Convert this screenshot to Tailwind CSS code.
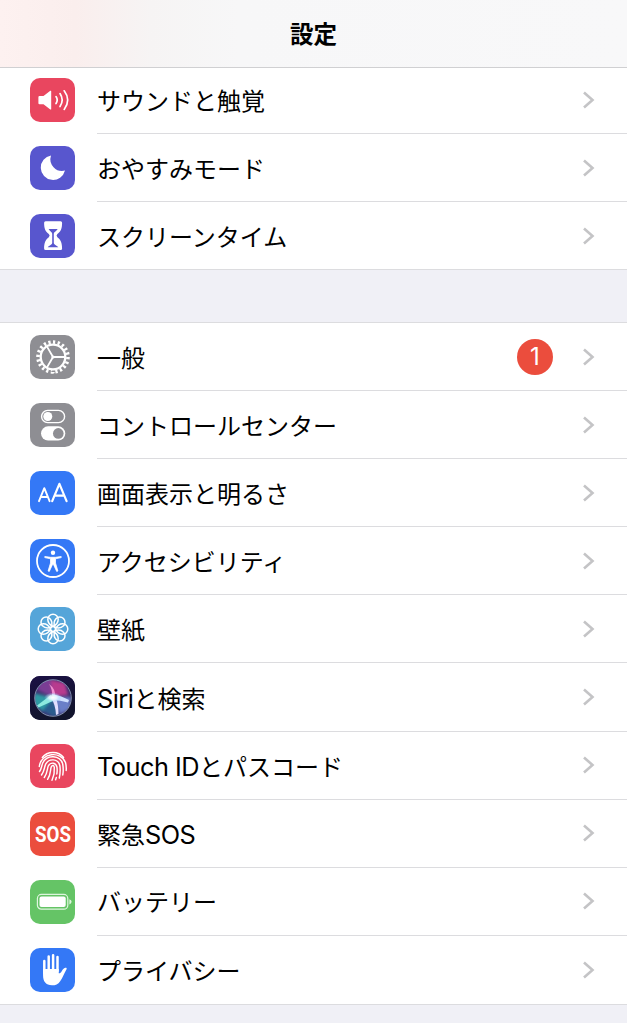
<!DOCTYPE html>
<html lang="ja">
<head>
    <meta charset="UTF-8" />
    <meta name="viewport" content="width=device-width, initial-scale=1.0" />
    <title>設定</title>
    <script src="https://cdn.jsdelivr.net/npm/@tailwindcss/browser@4"></script>
</head>
<body class="bg-[#f0f0f6] text-black font-[Inter,'Noto_Sans_CJK_JP',sans-serif] overflow-hidden h-screen">

    <!-- Nav bar -->
    <header class="relative z-10 h-[68px] flex items-center justify-center border-b border-[#d0d0d2] bg-[linear-gradient(90deg,#fdf1f0_0%,#faeeed_12%,#f6f4f4_24%,#f7f7f8_38%,#f8f8f9_100%)]">
        <h1 class="pt-[2px] text-[23.5px] leading-none font-bold">設定</h1>
    </header>

    <main class="-mt-[2px]">
        <section id="alerts" class="h-[204px] bg-white border-b border-[#dcdcdf]"></section>
        <section id="system" class="mt-[52px] bg-white border-y border-[#dcdcdf]"></section>
    </main>

    <script>
        const icons = {
            sound: `<path fill="#fff" d="M8.500 18h4l6.800-5.200q.9-.5.9.5v17.600q0 1-.9.5L12.500 26.300h-4q-1.100 0-1.100-1.100v-6q0-1.200 1.100-1.200z"/>
                <g fill="none" stroke="#fff" stroke-width="1.700" stroke-linecap="round"><path d="M25 18.600q2.400 3.500 0 7"/><path d="M29 15.600q4.400 6.500 0 13"/><path d="M33.200 12.800q7 9.300 0 18.600"/></g>`,
            moon: `<path fill="#fff" d="M20 9.500A12.300 12.300 0 1 0 34 24.600A11.800 11.800 0 0 1 20 9.500z"/>`,
            hourglass: `<path fill="#fff" d="M14.600 7.200h15q1.500 0 1.500 1.500c0 6-1.300 8.800-4.700 11.300q-1.700 1.600 0 3.200c3.400 2.500 4.700 6 4.700 11.300q0 1.600-1.500 1.600h-15q-1.500 0-1.500-1.600c0-5.300 1.300-8.800 4.700-11.300q1.700-1.600 0-3.200c-3.400-2.500-4.700-5.300-4.700-11.300q0-1.500 1.500-1.500z"/>
                <path fill="#5856ce" d="M17.600 14.900h9c-.8 2-3.800 2.900-3.800 4.900v9c0 2 2.800 2.300 4.500 4.500H16.700c1.700-2.200 4.500-2.500 4.500-4.500v-9c0-2-2.800-2.900-3.600-4.900z"/>`,
            gear: `<g fill="none" stroke="#fff"><circle cx="22" cy="22" r="12.300" stroke-width="2.300"/>
                <circle cx="22" cy="22" r="15" stroke-width="3.600" pathLength="100" stroke-dasharray="2.400 2.600"/>
                <path stroke-width="1.800" d="M22 22h12M22 22l-6-10.400M22 22l-6 10.400"/></g><circle cx="22" cy="22" r="1.600" fill="#fff"/>`,
            toggles: `<rect x="10.600" y="7.400" width="23" height="12.200" rx="6.100" fill="none" stroke="#fff" stroke-width="1.400"/><circle cx="16.800" cy="13.500" r="4.500" fill="#fff"/>
                <rect x="10" y="23.300" width="24.300" height="14.200" rx="7.100" fill="#fff"/><circle cx="27.300" cy="30.400" r="5.300" fill="#8e8e93"/>`,
            text: `<g fill="none" stroke="#fff" stroke-linecap="round" stroke-linejoin="round"><path stroke-width="1.900" d="M8 30.200l5.300-13L18.600 30.200M10 26h6.600"/><path stroke-width="2.200" d="M21.200 30.200l7.200-17.400L35.600 30.200M24 24.700h8.800"/></g>`,
            access: `<circle cx="22" cy="22" r="16" fill="none" stroke="#fff" stroke-width="1.800"/><circle cx="22" cy="13.700" r="2.200" fill="#fff"/>
                <path fill="#fff" stroke="#fff" stroke-width=".8" stroke-linejoin="round" d="M13.800 17.500l5.700.8h5l5.700-.8v1.100l-5.700 1.200v4.200l2.400 8-1.200.4L22.500 25.500h-1L18.300 32.400l-1.200-.4 2.400-8v-4.200l-5.700-1.200z"/>`,
            flower: `<g fill="none" stroke="#fff" stroke-width="1.500"><circle cx="22" cy="22" r="2.500"/>` +
                [0, 45, 90, 135, 180, 225, 270, 315].map(a => `<path d="M22 19.500c-3.600-1.700-5.200-4.300-5.200-7.200a5.200 5.100 0 0 1 10.400 0c0 2.900-1.600 5.500-5.200 7.200z" transform="rotate(${a} 22 22)"/>`).join("") + `</g>`,
            siri: `<defs>
                    <linearGradient id="siriBg" x2=".3" y2="1"><stop stop-color="#1c1145"/><stop offset="1" stop-color="#11142c"/></linearGradient>
                    <radialGradient id="siriGlow"><stop stop-color="#fff"/><stop offset=".45" stop-color="#e9f8ff" stop-opacity=".8"/><stop offset="1" stop-color="#8cf" stop-opacity="0"/></radialGradient>
                    <filter id="soft" x="-30%" y="-30%" width="160%" height="160%"><feGaussianBlur stdDeviation="1.800"/></filter>
                    <filter id="ray" x="-30%" y="-30%" width="160%" height="160%"><feGaussianBlur stdDeviation=".4"/></filter>
                    <clipPath id="orb"><circle cx="22" cy="22" r="18"/></clipPath>
                </defs>
                <rect x="-1" width="46" height="44" fill="url(#siriBg)"/>
                <g clip-path="url(#orb)"><rect width="44" height="44" fill="#3a2f70"/>
                    <g filter="url(#soft)"><path fill="#b83a8e" d="M21 21L17 3l17 4 3 12z"/><path fill="#7a3c94" d="M21 21L5 13l8-10 7 1z"/><path fill="#2f9aa4" d="M22 22L3 17v11l9 8z"/><path fill="#2a5b8e" d="M22 22L11 35l12 6 5-3z"/><path fill="#6a7fc8" d="M22 22l18-1-1 12-10 5z"/></g>
                    <g filter="url(#ray)"><path fill="#f08fd0" d="M21 21Q22 14 18 8q7 5 6 13z"/><path fill="#8cebdf" d="M20 19L6 29.500l1.500 2L24 24z"/><path fill="#cfe0ff" d="M21 18q10 2 17 6l-1 2.500q-8-2.500-15-2.500z"/><path fill="#e2deff" d="M19.500 21q5 7 5.500 18l2.500-1q0-10-3-17z"/></g>
                    <ellipse cx="22" cy="21.500" rx="9" ry="5" fill="url(#siriGlow)"/></g>
                <circle cx="22" cy="22" r="18.300" fill="none" stroke="#9caeca" stroke-opacity=".8"/>`,
            finger: `<g fill="none" stroke="#fff" stroke-width="1.450" stroke-linecap="round">
                <path d="M11.300 13.500c5-6.700 16.200-6.700 21.300 0"/>
                <path d="M8.300 22.500C10 8.500 30 6.500 34.500 18.500q1 3.500.7 8"/>
                <path d="M8.500 27.500c2-2.500 2-5.500 3.200-8.500C16 10.200 29 10.800 31.700 20q1 5.500.1 11"/>
                <path d="M10.500 31c3-4 2.600-7 4-10.500 3.200-6.600 12.700-6 14.300 1 .8 4 .4 8-.5 12.500"/>
                <path d="M13.300 33.500c3.600-5 2.500-8.500 4.200-12 2.400-3.800 7.600-2.800 8.400 1.500.6 3 .2 5-.1 7"/>
                <path d="M16.600 35.300c3.600-5 2.300-8.800 3.700-12.500 1-2 2.700-1.500 3 .5.500 5-.5 9-2.300 13"/><path d="M25.300 33.500l-.7 2.300"/></g>`,
            sos: `<text x="22" y="29.500" text-anchor="middle" fill="#fff" font-family="Roboto" font-weight="700" font-size="21.500" textLength="36" lengthAdjust="spacingAndGlyphs">SOS</text>`,
            battery: `<rect x="6.400" y="14.400" width="30.400" height="14.800" rx="4" fill="none" stroke="#dff5df" stroke-width="1.200"/><rect x="8.500" y="16.600" width="26.200" height="10.400" rx="2" fill="#fff"/><path fill="#dff5df" d="M38.400 19.200q2.200.8 2.200 2.600t-2.200 2.600z"/>`,
            hand: `<g stroke="#fff" stroke-width="2.500" stroke-linecap="round"><path d="M13.300 13v12M17.700 8.500v14M22.100 7.200v15M26.500 9v14"/></g>
                <path fill="#fff" d="M12.050 21h15.700v4.200c1.300.2 2.100-.6 2.800-1.800 1.200-2 2.200-3.200 3.700-3.700 1.200-.3 1.800.5 1.300 1.500-2.600 4.400-3.700 8.200-6.400 12-2 3-4.600 4.100-8.200 4.100-6 0-8.900-3.800-8.900-10z"/>`
        };

        const alerts = [
            { label: "サウンドと触覚", icon: "sound", bg: "bg-[#e9465f]" },
            { label: "おやすみモード", icon: "moon", bg: "bg-[#5856ce]" },
            { label: "スクリーンタイム", icon: "hourglass", bg: "bg-[#5856ce]" }
        ];

        const system = [
            { label: "一般", icon: "gear", bg: "bg-[#8e8e93]", badge: 1 },
            { label: "コントロールセンター", icon: "toggles", bg: "bg-[#8e8e93]" },
            { label: "画面表示と明るさ", icon: "text", bg: "bg-[#3478f6]" },
            { label: "アクセシビリティ", icon: "access", bg: "bg-[#3478f6]" },
            { label: "壁紙", icon: "flower", bg: "bg-[#55a5d9]" },
            { label: "Siriと検索", icon: "siri", bg: "bg-[#1c1145]" },
            { label: "Touch IDとパスコード", icon: "finger", bg: "bg-[#e9465f]" },
            { label: "緊急SOS", icon: "sos", bg: "bg-[#eb4d3d]" },
            { label: "バッテリー", icon: "battery", bg: "bg-[#65c466]" },
            { label: "プライバシー", icon: "hand", bg: "bg-[#3478f6]" }
        ];

        // Latin runs are set slightly larger and tighter than the kana around them
        const latin = s => s.replace(/[A-Za-z][A-Za-z ]*/g, m => `<span class="text-[25.3px] tracking-[-0.5px]">${m}</span>`);

        function renderList(id, rows) {
            document.getElementById(id).innerHTML = rows.map((r, i) => `
      <a class="flex items-center h-[68.1px] pl-[30px]">
        <span class="w-[45px] h-11 shrink-0 rounded-[10px] overflow-hidden flex justify-center ${r.bg}"><svg viewBox="0 0 44 44" class="size-11 shrink-0 overflow-visible">${icons[r.icon]}</svg></span>
        <span class="ml-[22px] flex-1 self-stretch flex items-center pr-[32px] ${i < rows.length - 1 ? 'border-b border-[#dcdcdf]' : ''}">
          <span class="flex-1 pt-[4px] text-[24px] leading-none whitespace-nowrap">${latin(r.label)}</span>
          ${r.badge ? `<span class="size-9 mr-[29px] rounded-full bg-[#eb4d3d] text-white text-[24px] flex items-center justify-center">${r.badge}</span>` : ''}
          <svg viewBox="0 0 13 18" class="w-[13px] h-[18px]" fill="none" stroke="#c4c4c6" stroke-width="2.600"><path d="M2 1.500L10.500 9 2 16.500"/></svg>
        </span>
      </a>
    `).join("");
        }

        renderList("alerts", alerts);
        renderList("system", system);
    </script>
</body>
</html>
